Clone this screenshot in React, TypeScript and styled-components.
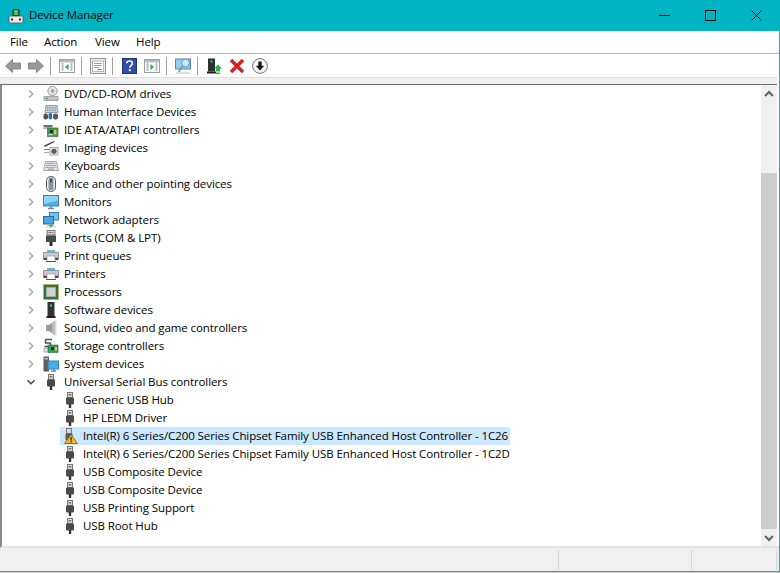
import React from "react";
import styled, { createGlobalStyle } from "styled-components";

const Global = createGlobalStyle`
  html, body { margin: 0; padding: 0; background: #fff; }
  body { font-family: "Open Sans", "Noto Sans", "Liberation Sans", sans-serif; }
`;

const Window = styled.div`
  width: 780px; height: 573px; box-sizing: border-box; overflow: hidden;
  display: flex; flex-direction: column; background: #fff;
  font-family: "Open Sans", "Noto Sans", "Liberation Sans", sans-serif;
  font-size: 11.5px; letter-spacing: -0.09px; color: #000;
`;
const Frame = styled.div`
  flex: 1; min-height: 0; display: flex; flex-direction: column;
  border-right: 1px solid #00b4c3; border-bottom: 1px solid #00b4c3;
`;
const TitleBar = styled.header`
  height: 31px; flex: none; background: #00b4c3; display: flex; align-items: center;
  padding-left: 8px;
`;
const TitleText = styled.span`margin-left: 5px; flex: 1; padding-bottom: 2px;`;
const WinButton = styled.div`
  width: 46px; height: 31px; display: flex; align-items: center; justify-content: center;
`;
const MenuBar = styled.nav`
  height: 22px; flex: none; display: flex; align-items: center; padding-left: 10px;
  border-bottom: 1px solid #b3b3c0;
`;
const MenuItem = styled.span<{ $w: number }>`width: ${p => p.$w}px; padding-bottom: 2px;`;
const ToolBar = styled.div`
  height: 23px; flex: none; display: flex; align-items: center; padding-left: 5px;
`;
const ToolGroup = styled.div`display: flex; gap: 7px; align-items: center;`;
const ToolSep = styled.div`width: 1px; height: 18px; background: #a0a0a0; margin: 0 8px 0 6px;`;
const Band = styled.div`
  flex: none; background: #f0f0f0; height: 6px; border-top: 1px solid #e0e0e0;
  border-bottom: 1px solid #6e6e6e; margin-right: 2px;
`;
const Body = styled.div`
  flex: 1; min-height: 0; display: flex; border-left: 2px solid #8a8a8a; padding-right: 2px;
  border-bottom: 2px solid #e3e3e3;
`;
const Tree = styled.ul`
  flex: 1; min-width: 0; list-style: none; margin: 0 0 0 -2px; padding: 0;
`;
const Row = styled.li`
  height: 18px; display: flex; align-items: center; padding-left: 23px; white-space: nowrap;
`;
const Expander = styled.span`
  width: 16px; height: 18px; display: flex; align-items: center; justify-content: center; margin-right: 4px;
`;
const Label = styled.span`margin-left: 5px; padding-bottom: 2px;`;
const ChildRow = styled.li<{ $selected?: boolean }>`
  height: 18px; display: flex; align-items: center; white-space: nowrap; width: fit-content;
  margin-left: 60px; padding: 0 2px; background: ${p => (p.$selected ? "#cce8ff" : "transparent")};
`;
const ScrollBar = styled.div`
  width: 16px; flex: none; background: #f0f0f0; display: flex; flex-direction: column;
`;
const ScrollArrow = styled.div`
  height: 17px; flex: none; display: flex; align-items: center; justify-content: center;
`;
const ScrollGap = styled.div<{ $h: number }>`height: ${p => p.$h}px; flex: none;`;
const ScrollThumb = styled.div`flex: 1; background: #cdcdcd;`;
const StatusBar = styled.footer`
  height: 23px; flex: none; background: #f0f0f0; display: flex; align-items: center; padding-right: 2px;
`;
const StatusCell = styled.div<{ $w?: number }>`
  height: 20px; box-sizing: border-box; border-right: 1px solid #d7d7d7;
  ${p => (p.$w ? `width: ${p.$w}px; flex: none;` : "flex: 1;")}
`;
const Residue = styled.div`height: 1px; flex: none; background: #c9cdd0;`;

const Svg: React.FC<{ children: React.ReactNode }> = ({ children }) => (
  <svg width="16" height="16" viewBox="0 0 16 16" style={{ flex: "none", display: "block" }}>{children}</svg>
);

const Chevron = ({ open }: { open?: boolean }) => (
  <svg width="10" height="10" viewBox="0 0 10 10">
    <path d={open ? "M1.5 3.2 5 6.8 8.5 3.2" : "M3 1.5 6.8 5 3 8.5"} fill="none" stroke={open ? "#444" : "#a6a6a6"} strokeWidth="1.4" />
  </svg>
);

const I = {
  usb: () => (
    <Svg>
      <rect x="5.5" y="0.5" width="5" height="5" fill="#d8d8d8" stroke="#777" />
      <rect x="6.8" y="2" width="1" height="1.5" fill="#555" /><rect x="8.2" y="2" width="1" height="1.5" fill="#555" />
      <rect x="4" y="5.5" width="8" height="7" rx="1" fill="#4a4a4a" />
      <rect x="6.8" y="12" width="2.4" height="4" fill="#333" />
    </Svg>
  ),
  usbWarn: () => (
    <Svg>
      <rect x="4.5" y="0.5" width="5" height="5" fill="#d8d8d8" stroke="#777" />
      <rect x="3.5" y="5.5" width="7" height="7" rx="1" fill="#5a5a5a" />
      <path d="M9 6.5 15.5 15.5H2.5Z" fill="#f5b81f" stroke="#8a5a00" strokeWidth="0.8" />
      <rect x="8.5" y="9" width="1.2" height="3.6" fill="#222" /><rect x="8.5" y="13.2" width="1.2" height="1.2" fill="#222" />
    </Svg>
  ),
  dvd: () => (
    <Svg>
      <circle cx="9.5" cy="5" r="4.6" fill="#e8e8e8" stroke="#9a9a9a" />
      <circle cx="9.5" cy="5" r="1.4" fill="#9fb4c4" stroke="#777" strokeWidth="0.6" />
      <path d="M1 10.5h14v4H1z" fill="#c4c4c4" stroke="#8c8c8c" strokeWidth="0.7" />
      <rect x="3" y="11.7" width="2" height="1.4" fill="#2fb54a" />
    </Svg>
  ),
  hid: () => (
    <Svg>
      <path d="M3 1.5h11l1 7H2Z" fill="#c9d1d9" stroke="#7d8791" strokeWidth="0.8" />
      <path d="M4 3.5h9M4 5h9M4 6.5h9" stroke="#808a94" strokeDasharray="1 .6" strokeWidth="0.8" />
      <rect x="0.5" y="9.5" width="4.5" height="6" rx="2" fill="#4f4f55" />
      <rect x="5.5" y="9" width="3.6" height="6.5" rx="1.7" fill="#2d6fb5" />
      <rect x="10" y="9.5" width="5" height="6" rx="2" fill="#5a5a60" />
      <rect x="6" y="9" width="1" height="2" fill="#d33" />
    </Svg>
  ),
  ide: () => (
    <Svg>
      <rect x="0.5" y="3" width="9" height="2.5" fill="#6f6f6f" />
      <rect x="0" y="5.5" width="10" height="1.5" fill="#bbb" />
      <rect x="4.5" y="6" width="10.5" height="8.5" fill="#31a05a" stroke="#1f6e3c" strokeWidth="0.6" />
      <rect x="7" y="8" width="3" height="3" fill="#2a2a2a" /><rect x="11" y="8" width="2.4" height="4.5" fill="#e4c34c" />
      <rect x="5.5" y="12" width="4" height="1.2" fill="#d9d9d9" />
    </Svg>
  ),
  img: () => (
    <Svg>
      <path d="M1 5.5 11 1l.6 1L1.8 7Z" fill="#444" />
      <path d="M1 9.5h5.5" stroke="#777" />
      <rect x="7" y="7.5" width="8" height="7.5" fill="#e3e6ea" stroke="#8a8f96" strokeWidth="0.7" />
      <circle cx="11" cy="11.3" r="2.2" fill="#566" stroke="#2a2a2a" strokeWidth="0.6" />
      <path d="M1 12.5h5.5" stroke="#aaa" />
    </Svg>
  ),
  kbd: () => (
    <Svg>
      <path d="M2.5 3.5h11l2 9H.5Z" fill="#dfe3e8" stroke="#8d949c" strokeWidth="0.8" />
      <path d="M3.5 5.5h9M3 7.5h10M2.5 9.5h11" stroke="#8b95a0" strokeDasharray="1 .5" strokeWidth="1" />
      <path d="M5 11.2h6" stroke="#8b95a0" />
    </Svg>
  ),
  mouse: () => (
    <Svg>
      <rect x="3.5" y="0.5" width="9" height="15" rx="4.2" fill="#eef0f3" stroke="#55595f" />
      <rect x="5.5" y="1.5" width="5" height="13" rx="2.5" fill="#8a94a0" />
      <rect x="7.4" y="2.5" width="1.3" height="4" fill="#2f3338" />
    </Svg>
  ),
  monitor: () => (
    <Svg>
      <rect x="0.5" y="1.5" width="15" height="10.5" fill="#46b0ea" stroke="#4a7ca5" />
      <path d="M1 2h14v4.5L1 10Z" fill="#8ed4f7" />
      <path d="M5 14.5h6M8 12v2" stroke="#6a8aa3" strokeWidth="1.4" />
    </Svg>
  ),
  net: () => (
    <Svg>
      <rect x="6.5" y="0.5" width="9" height="7.5" fill="#6cc4f2" stroke="#3a7fb0" />
      <rect x="0.5" y="4.5" width="10" height="7.5" fill="#46a6e6" stroke="#2c6fa3" />
      <path d="M3 14h10v1.5H3Z" fill="#d7dbd8" />
      <path d="M8 11.5 11 14H9v1.5H7V14H5Z" fill="#4cbb4c" />
    </Svg>
  ),
  ports: () => (
    <Svg>
      <rect x="4" y="0.5" width="8" height="4.5" fill="#d5d5d5" stroke="#7a7a7a" />
      <path d="M5.5 2.5h5" stroke="#555" strokeDasharray="1 .6" />
      <rect x="3" y="5.5" width="10" height="6.5" fill="#4a4a4a" />
      <rect x="6.5" y="12" width="3" height="4" fill="#2e2e2e" />
    </Svg>
  ),
  printer: () => (
    <Svg>
      <rect x="4" y="2" width="8" height="2" fill="#5abcea" />
      <path d="M0.5 4.5h15v5.5h-15Z" fill="#c8ccd0" stroke="#7c8084" strokeWidth="0.8" />
      <rect x="0.5" y="10" width="15" height="2" fill="#4a4a4a" />
      <rect x="4" y="8" width="8" height="5.5" fill="#fff" stroke="#8a8a8a" strokeWidth="0.6" />
      <rect x="3" y="13" width="10" height="1" fill="#555" />
    </Svg>
  ),
  cpu: () => (
    <Svg>
      <rect x="0.5" y="0.5" width="15" height="15" fill="#2f7d3c" stroke="#c9a93b" strokeDasharray="1 .6" />
      <rect x="1.5" y="1.5" width="13" height="13" fill="#2b6f38" />
      <rect x="3.2" y="3.2" width="9.6" height="9.6" fill="#cfcfcb" stroke="#9a9a96" strokeWidth="0.6" />
    </Svg>
  ),
  soft: () => (
    <Svg>
      <rect x="4.5" y="0" width="7" height="14" fill="#333" />
      <rect x="7" y="2.5" width="2" height="2" fill="#3fdc5f" />
      <rect x="3.5" y="14" width="9" height="2" fill="#1f1f1f" />
    </Svg>
  ),
  sound: () => (
    <Svg>
      <path d="M3 5h3l6-4.5v15L6 11H3Z" fill="#9a9a9a" />
      <path d="M9 2.5 12 .5v15l-3-2Z" fill="#bdbdbd" />
      <path d="M12 .5h1.5v15H12Z" fill="#dcdcdc" />
    </Svg>
  ),
  storage: () => (
    <Svg>
      <path d="M9 1.5H2.5v3.5h5v3.5H1.5" fill="none" stroke="#555" strokeWidth="1.4" />
      <rect x="1" y="10" width="6" height="4" fill="#e3e3e3" stroke="#8a8a8a" strokeWidth="0.6" />
      <rect x="5" y="7" width="10" height="7.5" fill="#31a05a" stroke="#1f6e3c" strokeWidth="0.6" />
      <rect x="8" y="9" width="3" height="3" fill="#2a2a2a" /><rect x="12" y="9" width="2" height="3.6" fill="#e4c34c" />
    </Svg>
  ),
  system: () => (
    <Svg>
      <rect x="0.5" y="0.5" width="5.5" height="15" fill="#5a5f66" />
      <rect x="1.5" y="2" width="3.5" height="1.4" fill="#c9c9c9" />
      <rect x="5" y="5" width="10.5" height="8" fill="#46b0ea" stroke="#3a7fb0" />
      <path d="M8 15h5M10.5 13v2" stroke="#6a8aa3" strokeWidth="1.3" />
    </Svg>
  ),
};

type Item = { name: string; Icon: () => React.ReactElement };
const top: Item[] = [
  { name: "DVD/CD-ROM drives", Icon: I.dvd },
  { name: "Human Interface Devices", Icon: I.hid },
  { name: "IDE ATA/ATAPI controllers", Icon: I.ide },
  { name: "Imaging devices", Icon: I.img },
  { name: "Keyboards", Icon: I.kbd },
  { name: "Mice and other pointing devices", Icon: I.mouse },
  { name: "Monitors", Icon: I.monitor },
  { name: "Network adapters", Icon: I.net },
  { name: "Ports (COM & LPT)", Icon: I.ports },
  { name: "Print queues", Icon: I.printer },
  { name: "Printers", Icon: I.printer },
  { name: "Processors", Icon: I.cpu },
  { name: "Software devices", Icon: I.soft },
  { name: "Sound, video and game controllers", Icon: I.sound },
  { name: "Storage controllers", Icon: I.storage },
  { name: "System devices", Icon: I.system },
];
const usbChildren = [
  "Generic USB Hub",
  "HP LEDM Driver",
  "Intel(R) 6 Series/C200 Series Chipset Family USB Enhanced Host Controller - 1C26",
  "Intel(R) 6 Series/C200 Series Chipset Family USB Enhanced Host Controller - 1C2D",
  "USB Composite Device",
  "USB Composite Device",
  "USB Printing Support",
  "USB Root Hub",
];

const Arrow = ({ dir }: { dir: "l" | "r" }) => (
  <Svg>
    <path
      d={dir === "l" ? "M.5 8 7.5 1.5V5H15.5v6H7.5v3.5Z" : "M15.5 8 8.5 1.5V5H.5v6h8v3.5Z"}
      fill="#9a9a9a" stroke="#7a7a7a" strokeWidth="0.8"
    />
  </Svg>
);
const WinPane = ({ mark }: { mark: "left" | "right" }) => (
  <Svg>
    <rect x="0.5" y="1.5" width="15" height="13" fill="#fff" stroke="#9aa0a6" />
    <rect x="1" y="2" width="14" height="2.5" fill="#b6bcc2" />
    <path d="M2.5 6h2M2.5 8h2M2.5 10h2M2.5 12h2M11.5 6h2M11.5 8h2M11.5 10h2M11.5 12h2" stroke="#6f8296" />
    <path d={mark === "left" ? "M9.5 6v6L6 9Z" : "M6.5 6v6L10 9Z"} fill="#2fa84f" />
  </Svg>
);

export default function App() {
  return (
    <Window>
      <Global />
      <Frame>
        <TitleBar>
          <Svg>
            <rect x="4.5" y="1" width="7" height="7" fill="#333" />
            <rect x="6" y="2" width="4" height="5" fill="#49c65d" />
            <rect x="1" y="8" width="14" height="7" rx="1" fill="#e8e8e8" stroke="#555" strokeWidth="0.8" />
            <rect x="3" y="10.5" width="2" height="2" fill="#333" /><rect x="11" y="10.5" width="2" height="2" fill="#333" />
          </Svg>
          <TitleText>Device Manager</TitleText>
          <WinButton>
            <svg width="11" height="11" viewBox="0 0 11 11"><path d="M0 5.5h11" stroke="#000" /></svg>
          </WinButton>
          <WinButton>
            <svg width="11" height="11" viewBox="0 0 11 11"><rect x="0.5" y="0.5" width="10" height="10" fill="none" stroke="#000" /></svg>
          </WinButton>
          <WinButton>
            <svg width="11" height="11" viewBox="0 0 11 11"><path d="M.5.5l10 10M10.5.5l-10 10" stroke="#000" /></svg>
          </WinButton>
        </TitleBar>
        <MenuBar>
          <MenuItem $w={34}>File</MenuItem>
          <MenuItem $w={51}>Action</MenuItem>
          <MenuItem $w={41}>View</MenuItem>
          <MenuItem $w={40}>Help</MenuItem>
        </MenuBar>
        <ToolBar>
          <ToolGroup><Arrow dir="l" /><Arrow dir="r" /></ToolGroup>
          <ToolSep />
          <ToolGroup><WinPane mark="left" /></ToolGroup>
          <ToolSep />
          <ToolGroup>
            <Svg>
              <rect x="0.5" y="0.5" width="15" height="15" fill="#e9edf1" stroke="#8f969d" />
              <rect x="2.5" y="3" width="11" height="10.5" fill="#fff" stroke="#b2b8be" />
              <path d="M4 5.5h8M4 7.5h8M4 9.5h5" stroke="#9aa4ae" />
              <path d="M7 11.5h5" stroke="#45a4e0" />
            </Svg>
          </ToolGroup>
          <ToolSep />
          <ToolGroup>
            <Svg>
              <rect x="1.5" y="0.5" width="14" height="15" fill="#2f4fa8" stroke="#1f3580" />
              <path d="M5.8 5.2c0-3 5.6-3 5.6 0 0 2.2-2.6 2.2-2.6 4.6" fill="none" stroke="#fff" strokeWidth="1.6" />
              <rect x="7.8" y="11.2" width="2" height="2" fill="#fff" />
            </Svg>
            <WinPane mark="right" />
          </ToolGroup>
          <ToolSep />
          <ToolGroup>
            <Svg>
              <rect x="0.5" y="1" width="15" height="10" fill="#8fd0f2" stroke="#4c90b8" />
              <circle cx="10.5" cy="5" r="4" fill="#d5ecf9" fillOpacity="0.8" stroke="#77909f" />
              <path d="M7.5 8.3 3.5 14" stroke="#8a8f94" strokeWidth="1.5" />
              <path d="M1 15h14" stroke="#b8bcc0" />
            </Svg>
          </ToolGroup>
          <ToolSep />
          <ToolGroup>
            <Svg>
              <rect x="2" y="0.5" width="7" height="13" fill="#2f2f2f" />
              <rect x="4.5" y="2.5" width="2" height="2" fill="#3fdc5f" />
              <rect x="1" y="13.5" width="9" height="2" fill="#1f1f1f" />
              <path d="M12 6.5 16 10.5H14V13H10V10.5H8Z" fill="#2bb24c" />
              <path d="M10 14h4M10 15.5h4" stroke="#2bb24c" />
            </Svg>
            <Svg>
              <path d="M2 2 14 14M14 2 2 14" stroke="#d81e1e" strokeWidth="3.4" />
            </Svg>
            <Svg>
              <circle cx="8" cy="8" r="7.4" fill="#f7f7f7" stroke="#6f6f6f" />
              <path d="M8 12.5 3.8 7.8H6.3V3.6h3.4v4.2h2.5Z" fill="#1a1a1a" />
            </Svg>
          </ToolGroup>
        </ToolBar>
        <Band />
        <Body>
          <Tree>
            {top.map(({ name, Icon }) => (
              <Row key={name}>
                <Expander><Chevron /></Expander>
                <Icon />
                <Label>{name}</Label>
              </Row>
            ))}
            <Row>
              <Expander><Chevron open /></Expander>
              <I.usb />
              <Label>Universal Serial Bus controllers</Label>
            </Row>
            {usbChildren.map((name, i) => (
              <ChildRow key={i} $selected={i === 2}>
                {i === 2 ? <I.usbWarn /> : <I.usb />}
                <Label>{name}</Label>
              </ChildRow>
            ))}
          </Tree>
          <ScrollBar>
            <ScrollArrow>
              <svg width="10" height="8" viewBox="0 0 10 8"><path d="M1 6 5 2 9 6" fill="none" stroke="#606060" strokeWidth="2" /></svg>
            </ScrollArrow>
            <ScrollGap $h={71} />
            <ScrollThumb />
            <ScrollArrow>
              <svg width="10" height="8" viewBox="0 0 10 8"><path d="M1 2 5 6 9 2" fill="none" stroke="#606060" strokeWidth="2" /></svg>
            </ScrollArrow>
          </ScrollBar>
        </Body>
        <StatusBar>
          <StatusCell />
          <StatusCell $w={133} />
          <StatusCell $w={85} />
        </StatusBar>
      </Frame>
      <Residue />
    </Window>
  );
}
